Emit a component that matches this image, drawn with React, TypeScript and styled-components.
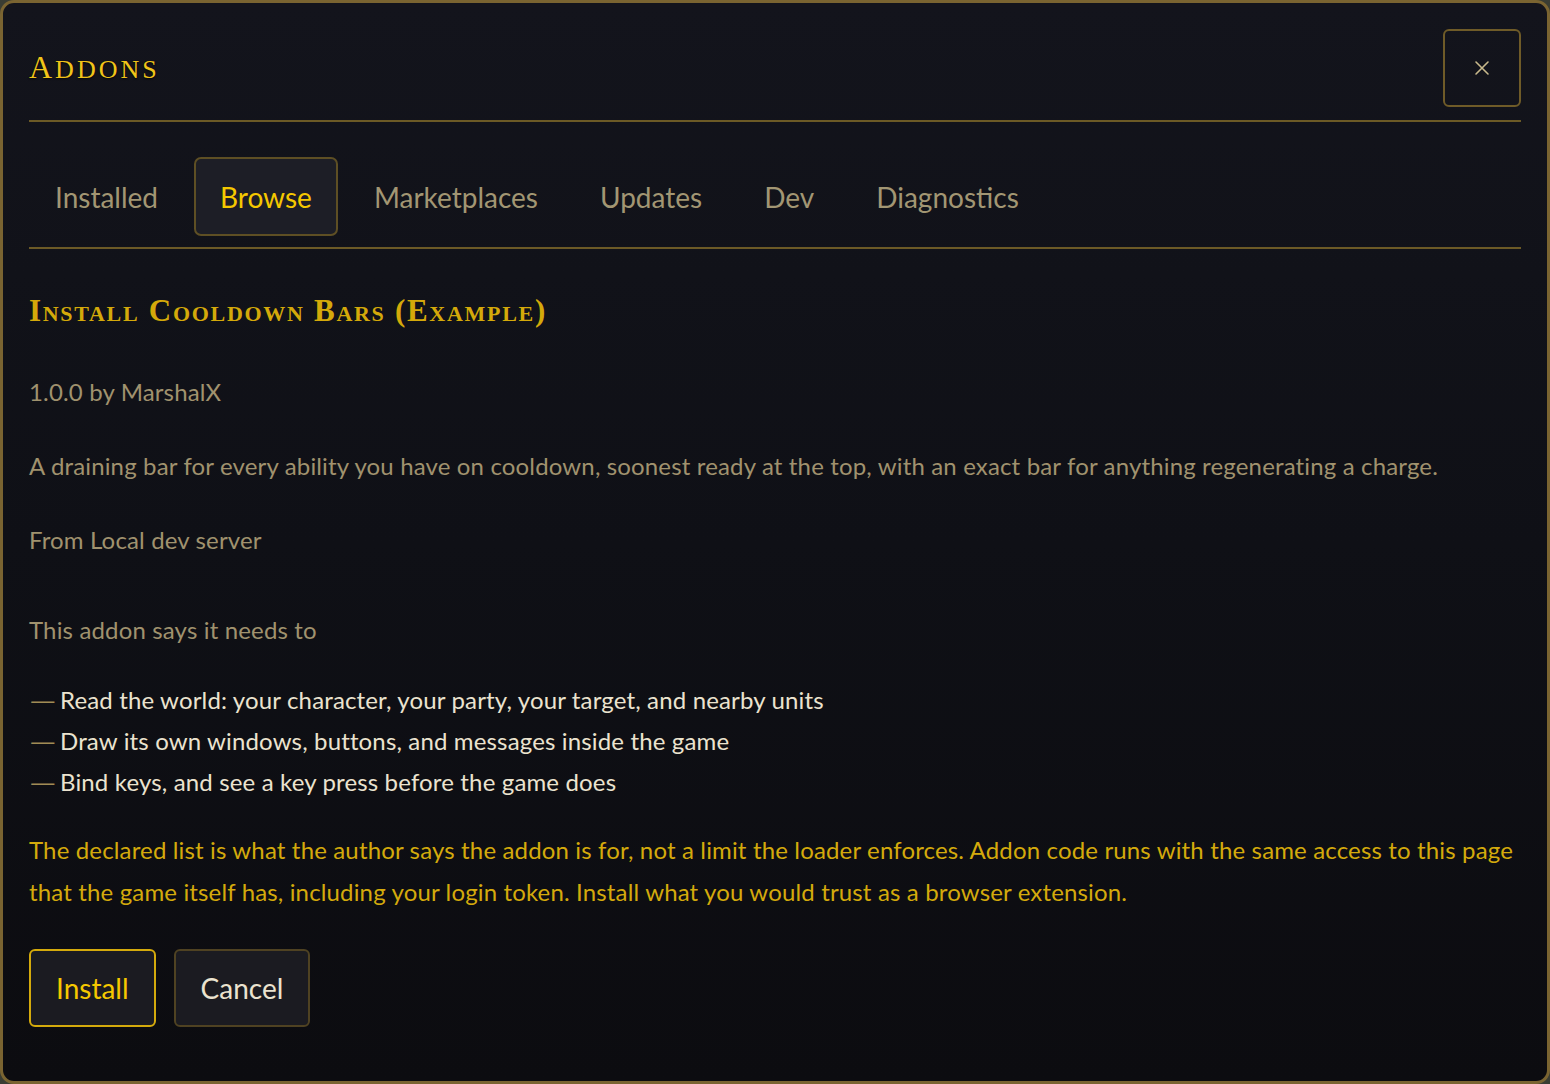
import React, { useState } from "react";
import styled, { createGlobalStyle, css } from "styled-components";

const GlobalStyle = createGlobalStyle`
  html, body {
    margin: 0;
    padding: 0;
    background: #3a3d33;
  }
  * {
    box-sizing: border-box;
  }
`;

const tabs = ["Installed", "Browse", "Marketplaces", "Updates", "Dev", "Diagnostics"];

const permissions = [
  "Read the world: your character, your party, your target, and nearby units",
  "Draw its own windows, buttons, and messages inside the game",
  "Bind keys, and see a key press before the game does",
];

export default function App() {
  const [activeTab, setActiveTab] = useState("Browse");

  return (
    <>
      <GlobalStyle />
      <Dialog>
        <Header>
          <Title>Addons</Title>
          <CloseButton aria-label="Close">
            <svg width="16" height="16" viewBox="0 0 16 16">
              <path d="M2 2 L14 14 M14 2 L2 14" stroke="#c8b98c" strokeWidth="1.6" strokeLinecap="round" />
            </svg>
          </CloseButton>
        </Header>

        <TabBar>
          {tabs.map((t) => (
            <Tab key={t} $active={t === activeTab} onClick={() => setActiveTab(t)}>
              {t}
            </Tab>
          ))}
        </TabBar>

        <Heading>Install Cooldown Bars (Example)</Heading>
        <Meta>1.0.0 by MarshalX</Meta>
        <Description>
          A draining bar for every ability you have on cooldown, soonest ready at the top, with an exact bar for anything regenerating a charge.
        </Description>
        <Source>From Local dev server</Source>

        <PermsTitle>This addon says it needs to</PermsTitle>
        <PermList>
          {permissions.map((p) => (
            <PermItem key={p}>
              <Dash>—</Dash>
              {p}
            </PermItem>
          ))}
        </PermList>

        <Warning>
          The declared list is what the author says the addon is for, not a limit the loader enforces. Addon code runs with the same access to this page that the game itself has, including your login token. Install what you would trust as a browser extension.
        </Warning>

        <Actions>
          <ActionButton $primary>Install</ActionButton>
          <ActionButton>Cancel</ActionButton>
        </Actions>
      </Dialog>
    </>
  );
}

// =================== Styled Components ===================

const bodyFont = `Lato, "Open Sans", sans-serif`;
const serifFont = `"Liberation Serif", "DejaVu Serif", serif`;

const Dialog = styled.div`
  width: 100%;
  height: 100vh;
  border: 3px solid #7a6431;
  border-radius: 14px;
  background: linear-gradient(180deg, #13141c 0%, #0f1016 50%, #0c0c10 100%);
  padding: 26px 26px;
  font-family: ${bodyFont};
  overflow: hidden;
`;

const Header = styled.div`
  display: flex;
  align-items: center;
  justify-content: space-between;
  padding-bottom: 13px;
  border-bottom: 2px solid #6c5a26;
`;

const Title = styled.h1`
  margin: 0 0 3px;
  font-family: ${serifFont};
  text-transform: uppercase;
  font-weight: 400;
  font-size: 26px;
  line-height: 1;
  letter-spacing: 3px;
  color: #f0c419;
  text-shadow: 0 1px 2px rgba(0, 0, 0, 0.8);

  &::first-letter {
    font-size: 32px;
  }
`;

const CloseButton = styled.button`
  width: 78px;
  height: 78px;
  display: flex;
  align-items: center;
  justify-content: center;
  background: transparent;
  border: 2px solid #6f5b28;
  border-radius: 6px;
  cursor: pointer;
  padding: 0;
`;

const TabBar = styled.div`
  display: flex;
  gap: 10px;
  margin-top: 35px;
  padding-bottom: 11px;
  border-bottom: 2px solid #6c5a26;
`;

const Tab = styled.button<{ $active?: boolean }>`
  height: 79px;
  padding: 0 24px;
  font-family: ${bodyFont};
  font-size: 28px;
  color: #a29673;
  background: transparent;
  border: 2px solid transparent;
  border-radius: 7px;
  cursor: pointer;

  ${({ $active }) =>
    $active &&
    css`
      color: #f5c800;
      background: #1d1e26;
      border-color: #5e4f24;
    `}
`;

const Heading = styled.h2`
  margin: 42px 0 0;
  font-family: ${serifFont};
  font-variant: small-caps;
  font-weight: 700;
  font-size: 31px;
  line-height: 40px;
  letter-spacing: 1.7px;
  color: #d4a90a;
`;

const Text = styled.p`
  margin: 0;
  font-size: 24px;
  letter-spacing: 0.15px;
  line-height: 42px;
  color: #a0926e;
`;

const Meta = styled(Text)`
  margin-top: 40px;
`;

const Description = styled(Text)`
  margin-top: 32px;
`;

const Source = styled(Text)`
  margin-top: 32px;
`;

const PermsTitle = styled(Text)`
  margin-top: 48px;
`;

const PermList = styled.ul`
  list-style: none;
  margin: 28px 0 0;
  padding: 0;
`;

const PermItem = styled.li`
  display: flex;
  align-items: center;
  font-size: 24px;
  letter-spacing: 0.15px;
  line-height: 41px;
  color: #ebe3cf;
`;

const Dash = styled.span`
  display: inline-block;
  width: 31px;
  color: #a08c55;
  transform: scaleX(1.45);
  transform-origin: left center;
`;

const Warning = styled(Text)`
  margin-top: 27px;
  color: #d4aa0c;
`;

const Actions = styled.div`
  display: flex;
  gap: 18px;
  margin-top: 36px;
`;

const ActionButton = styled.button<{ $primary?: boolean }>`
  height: 78px;
  padding: 0 25px;
  font-family: ${bodyFont};
  font-size: 28px;
  border-radius: 6px;
  background: #1b1b21;
  cursor: pointer;
  border: 2px solid ${({ $primary }) => ($primary ? "#d4aa0c" : "#4f4222")};
  color: ${({ $primary }) => ($primary ? "#f5c800" : "#ebe3cf")};
`;
